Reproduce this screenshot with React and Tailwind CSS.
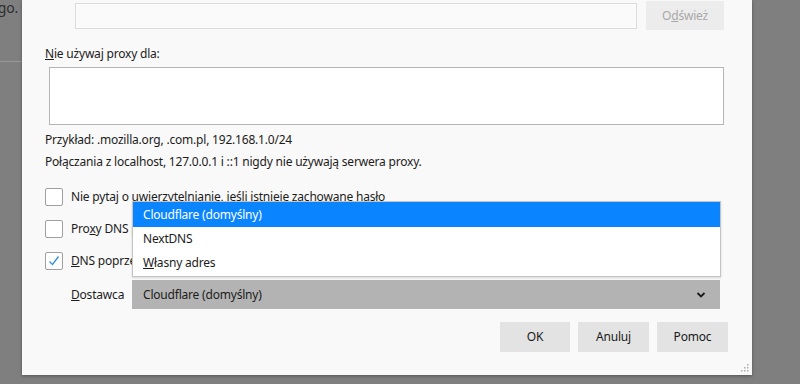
import React from 'react';

const font = { fontFamily: '"Noto Sans", "Open Sans", sans-serif' };

const Checkbox = ({ checked }) => (
    <div className='w-[18px] h-[18px] border border-[#a0a0a0] bg-white rounded-[2px] flex items-center justify-center shrink-0'>
        {checked && (
            <svg width="14" height="14" viewBox="0 0 14 14">
                <path d="M2.5 7.5 L5.5 10.5 L11.5 2.5" fill="none" stroke="#3b8fdc" strokeWidth="1.4" />
            </svg>
        )}
    </div>
);

const CheckRow = ({ checked, children }) => (
    <div className='flex items-center h-[32px] pl-[23px]'>
        <Checkbox checked={checked} />
        <span className='ml-[8px] whitespace-nowrap'>{children}</span>
    </div>
);

const Btn = ({ label, w }) => (
    <button className={`h-[30px] ${w} bg-[#e3e3e3] text-[#1a1a1a] flex items-center justify-center`}>
        {label}
    </button>
);

export default function App() {
    return (
        <div style={font} className='w-[800px] h-[384px] bg-[#7f7f7f] flex overflow-hidden text-[12px] tracking-[-0.2px] text-[#1c1c1c]'>
            {/* page behind the dimmer */}
            <div className='w-[22px] shrink-0 flex flex-col'>
                <div className='h-[62px] border-b border-[#989898] flex justify-end pr-[4px] overflow-hidden'>
                    <span className='text-[14px] text-[#2e2e2e] leading-none mt-[1px] whitespace-nowrap'>go.</span>
                </div>
            </div>

            {/* dialog */}
            <div className='w-[730px] h-[375px] bg-[#f9f9f9] shadow-[0_1px_3px_rgba(0,0,0,0.35)] flex flex-col relative'>
                <div className='flex items-center pt-[1px] pl-[53px]'>
                    <div className='w-[562px] h-[26px] border border-[#dcdcdc] bg-[#fafafa]'></div>
                    <div className='ml-[9px] w-[78px] h-[29px] bg-[#ececec] text-[#a8a8a8] flex items-center justify-center'>
                        O<span className='underline'>d</span>śwież
                    </div>
                </div>

                <div className='pl-[23px] mt-[15px] h-[18px] leading-[18px]'>
                    <span className='underline'>N</span>ie używaj proxy dla:
                </div>
                <div className='ml-[27px] mt-[4px] w-[675px] h-[58px] border border-[#b5b5b5] bg-white'></div>

                <div className='pl-[23px] mt-[6px] h-[18px] leading-[18px]'>
                    Przykład: .mozilla.org, .com.pl, 192.168.1.0/24
                </div>
                <div className='pl-[23px] mt-[4px] h-[18px] leading-[18px]'>
                    Połączania z localhost, 127.0.0.1 i ::1 nigdy nie używają serwera proxy.
                </div>

                <div className='mt-[10px] flex flex-col'>
                    <CheckRow>Nie pytaj o uwierzytelnianie, jeśli istnieje zachowane hasło</CheckRow>
                    <CheckRow>Pro<span className='underline'>x</span>y DNS podczas używania SOCKS v5</CheckRow>
                    <CheckRow checked><span className='underline'>D</span>NS poprzez HTTPS</CheckRow>
                </div>

                <div className='flex items-center mt-[3px]'>
                    <span className='ml-[49px] w-[61px]'><span className='underline'>D</span>ostawca</span>
                    <div className='w-[588px] h-[29px] bg-[#b3b3b3] flex items-center justify-between pl-[11px] pr-[14px]'>
                        <span>Cloudflare (domyślny)</span>
                        <svg width="10" height="8" viewBox="0 0 10 8">
                            <path d="M1.5 2 L5 5.5 L8.5 2" fill="none" stroke="#1a1a1a" strokeWidth="1.8" />
                        </svg>
                    </div>
                </div>

                <div className='flex justify-end gap-[8px] mt-[13px] pr-[24px]'>
                    <Btn label='OK' w='w-[70px]' />
                    <Btn label='Anuluj' w='w-[71px]' />
                    <Btn label='Pomoc' w='w-[71px]' />
                </div>

                {/* resize grip */}
                <svg className='absolute right-[3px] bottom-[3px]' width="9" height="9" viewBox="0 0 9 9">
                    <rect x="7" y="1" width="1.5" height="1.5" fill="#b0b0b0" />
                    <rect x="4" y="4" width="1.5" height="1.5" fill="#b0b0b0" />
                    <rect x="7" y="4" width="1.5" height="1.5" fill="#b0b0b0" />
                    <rect x="1" y="7" width="1.5" height="1.5" fill="#b0b0b0" />
                    <rect x="4" y="7" width="1.5" height="1.5" fill="#b0b0b0" />
                    <rect x="7" y="7" width="1.5" height="1.5" fill="#b0b0b0" />
                </svg>

                {/* open select popup */}
                <div className='absolute left-[110px] top-[201px] w-[589px] h-[76px] bg-white border border-[#c4c4c4] shadow-[0_1px_2px_rgba(0,0,0,0.15)] flex flex-col'>
                    <div className='h-[25px] bg-[#0a84ff] text-white flex items-center pl-[10px]'>Cloudflare (domyślny)</div>
                    <div className='h-[24px] flex items-center pl-[10px]'>NextDNS</div>
                    <div className='h-[24px] flex items-center pl-[10px]'><span className='underline'>W</span>łasny adres</div>
                </div>
            </div>
        </div>
    );
}
